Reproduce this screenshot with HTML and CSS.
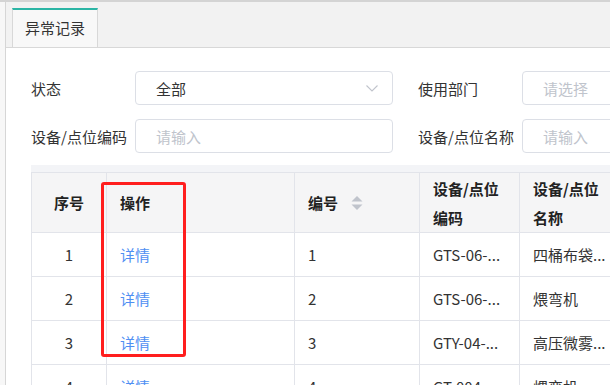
FILE: index.html
```html
<!DOCTYPE html>
<html lang="zh-CN">
<head>
    <meta charset="UTF-8">
    <meta name="viewport" content="width=device-width, initial-scale=1.0">
    <title>异常记录</title>
    <link rel="stylesheet" href="styles.css">
</head>
<body>
    <div class="page">
        <aside class="side"></aside>

        <main class="main">
            <div class="tabs">
                <div class="tab">异常记录</div>
            </div>

            <div class="content">
                <div class="filters">
                    <div class="field">
                        <label class="label">状态</label>
                        <div class="control select">
                            <span>全部</span>
                            <svg class="chevron" width="12" height="7" viewBox="0 0 12 7">
                                <polyline points="0.5,0.5 6,6 11.5,0.5" fill="none" stroke="#c0c4cc" stroke-width="1.1"/>
                            </svg>
                        </div>
                    </div>
                    <div class="field">
                        <label class="label">使用部门</label>
                        <div class="control placeholder">请选择</div>
                    </div>
                    <div class="field">
                        <label class="label">设备/点位编码</label>
                        <div class="control placeholder">请输入</div>
                    </div>
                    <div class="field">
                        <label class="label">设备/点位名称</label>
                        <div class="control placeholder">请输入</div>
                    </div>
                </div>

                <div class="table-wrap">
                    <div class="table-top"></div>
                    <table class="grid">
                        <colgroup>
                            <col class="c-no">
                            <col class="c-op">
                            <col class="c-num">
                            <col class="c-code">
                            <col class="c-name">
                        </colgroup>
                        <thead>
                            <tr>
                                <th class="center">序号</th>
                                <th>操作</th>
                                <th>
                                    <span class="sortable">编号
                                        <svg class="sort" width="12" height="14" viewBox="0 0 12 14">
                                            <polygon points="6,0 11.5,5.5 0.5,5.5" fill="#c0c4cc"/>
                                            <polygon points="0.5,8.5 11.5,8.5 6,14" fill="#c0c4cc"/>
                                        </svg>
                                    </span>
                                </th>
                                <th>设备/点位<br>编码</th>
                                <th>设备/点位<br>名称</th>
                            </tr>
                        </thead>
                        <tbody>
                            <tr>
                                <td class="center">1</td>
                                <td><a class="link">详情</a></td>
                                <td>1</td>
                                <td>GTS-06-...</td>
                                <td>四桶布袋...</td>
                            </tr>
                            <tr>
                                <td class="center">2</td>
                                <td><a class="link">详情</a></td>
                                <td>2</td>
                                <td>GTS-06-...</td>
                                <td>煨弯机</td>
                            </tr>
                            <tr>
                                <td class="center">3</td>
                                <td><a class="link">详情</a></td>
                                <td>3</td>
                                <td>GTY-04-...</td>
                                <td>高压微雾...</td>
                            </tr>
                            <tr>
                                <td class="center">4</td>
                                <td><a class="link">详情</a></td>
                                <td>4</td>
                                <td>GT-004...</td>
                                <td>煨弯机</td>
                            </tr>
                        </tbody>
                    </table>
                </div>
            </div>
        </main>

        <div class="highlight"></div>
    </div>
</body>
</html>
```

FILE: styles.css
```css
:root {
    --teal: #2bb5a5;
    --border: #dcdfe6;
    --line: #e2e4ea;
    --text: #333333;
    --placeholder: #c0c4cc;
    --link: #4f8ff3;
}

* {
    margin: 0;
    padding: 0;
    box-sizing: border-box;
    font-family: "Noto Sans CJK SC", "Noto Sans", sans-serif;
}

html, body {
    width: 610px;
    height: 385px;
    overflow: hidden;
    background: #ffffff;
}

.page {
    position: relative;
    display: flex;
    height: 385px;
    border-top: 2px solid #d4d4d4;
}

.side {
    width: 6px;
    flex: none;
    background: #f7f7f7;
    border-right: 1px solid #d6d6d6;
}

.main {
    flex: 1;
    min-width: 0;
}

.tabs {
    height: 46px;
    padding: 6px 0 0 6px;
    background: #f2f2f2;
    border-bottom: 1px solid #d8d8d8;
}

.tab {
    width: 86px;
    height: 39px;
    background: #f8f8f8;
    border-top: 2px solid var(--teal);
    border-left: 1px solid #d8d8d8;
    border-right: 1px solid #d8d8d8;
    color: var(--text);
    font-size: 15px;
    line-height: 36px;
    text-align: center;
}

.content {
    padding: 23px 0 0 25px;
}

.filters {
    display: grid;
    grid-template-columns: 362px 362px;
    column-gap: 25px;
    row-gap: 14px;
}

.field {
    display: flex;
    align-items: center;
}

.label {
    width: 104px;
    flex: none;
    color: var(--text);
    font-size: 15px;
    white-space: nowrap;
}

.control {
    width: 258px;
    flex: none;
    display: flex;
    align-items: center;
    justify-content: space-between;
    height: 34px;
    padding: 0 20px;
    border: 1px solid var(--border);
    border-radius: 4px;
    color: var(--text);
    font-size: 15px;
}

.placeholder {
    color: var(--placeholder);
}

.chevron {
    margin-right: -6px;
}

.table-wrap {
    margin-top: 12px;
}

.table-top {
    height: 7px;
    background: #f3f4f7;
}

.grid {
    width: 598px;
    table-layout: fixed;
    border-collapse: collapse;
    border-top: 1px solid #dadce3;
    font-size: 15px;
    color: var(--text);
}

.c-no { width: 75px; }
.c-op { width: 188px; }
.c-num { width: 125px; }
.c-code { width: 100px; }
.c-name { width: 110px; }

.grid th,
.grid td {
    border: 1px solid var(--line);
    padding: 0 8px 0 13px;
    text-align: left;
    white-space: nowrap;
    overflow: hidden;
}

.grid th {
    height: 60px;
    background: #f5f5f6;
    color: #222222;
    font-weight: bold;
    line-height: 29px;
}

.grid td {
    height: 44px;
}

.grid .center {
    text-align: center;
    padding: 0;
}

.sortable {
    display: inline-flex;
    align-items: center;
    gap: 13px;
}

.link {
    color: var(--link);
    cursor: pointer;
}

.highlight {
    position: absolute;
    left: 101px;
    top: 180px;
    width: 85px;
    height: 175px;
    border: 3px solid #ff1e1e;
    border-radius: 3px;
}
```
